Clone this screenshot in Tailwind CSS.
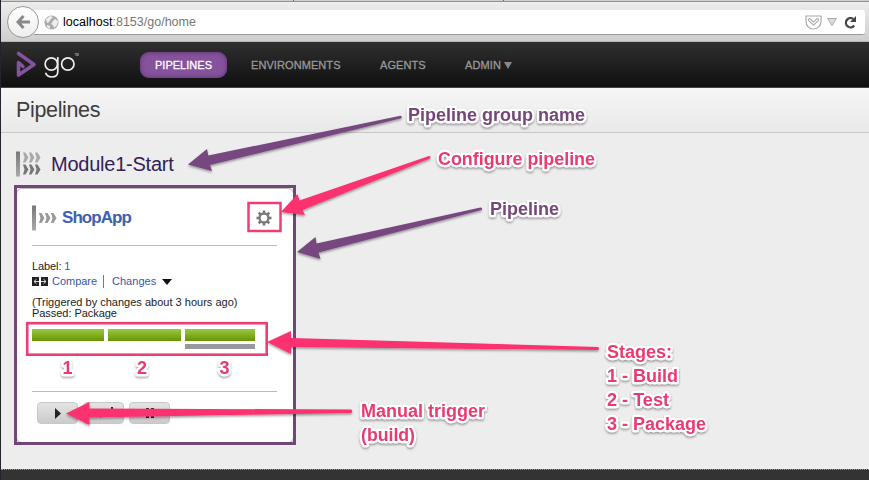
<!DOCTYPE html>
<html lang="en">
<head>
<meta charset="utf-8">
<title>Pipelines</title>
<script src="https://cdn.jsdelivr.net/npm/@tailwindcss/browser@4"></script>
</head>
<body class="relative h-[480px] w-[869px] overflow-hidden bg-[#ededed] font-['Liberation_Sans',sans-serif] text-[#222]">
<div class="flex h-[480px] flex-col border-l border-[#24242c]">
  <!-- Browser toolbar -->
  <div class="flex h-[2px] shrink-0 border-b border-[#939393] bg-[#cfcfcf]">
    <div class="w-[293px] border-r border-[#666]"></div><div class="w-[210px] border-r border-[#666]"></div>
  </div>
  <div class="flex h-10 shrink-0 items-center border-b border-[#b5b5b5] bg-linear-to-b from-[#ededed] to-[#cecece] pl-[6px] pr-[4px]">
    <div class="z-10 flex size-[32px] shrink-0 items-center justify-center rounded-full border border-[#999] bg-linear-to-b from-white to-[#eee]">
      <svg width="14" height="14" viewBox="0 0 14 14" fill="none" stroke="#888" stroke-width="3"><path d="M7.5 1 2 7l5.500 6M2 7h12"/></svg>
    </div>
    <div class="-ml-[5px] mt-[2px] flex h-[25px] grow items-center rounded-r-[3px] border-b border-[#999] bg-white pl-[10px] pr-[8px]">
      <svg width="15" height="15" viewBox="0 0 15 15"><circle cx="7.500" cy="7.500" r="7" fill="#aaa"/><path d="M2 4 6 1l3 1-2 2-2 3-2 1zM9 6l2-2 3 2-1 4-3 3-1-3-2-1zM3 10l3 1v3l-3-2z" fill="#eee"/></svg>
      <span class="ml-[4px] text-[12.5px] tracking-[0.01px] text-[#777] whitespace-nowrap"><span class="text-black">localhost</span>:8153/go/home</span>
      <svg class="ml-auto" width="17" height="15" viewBox="0 0 17 15" fill="none" stroke="#aaa" stroke-width="1.200"><path d="M1 1h15v5.500a7.500 7.500 0 0 1-15 0z"/><path d="M4.500 4.800 8.500 8.700l4-3.900" stroke-width="3.400" stroke-linecap="round"/><path d="M4.500 4.800 8.500 8.700l4-3.900" stroke="#f5f5f5" stroke-width="1.300" stroke-linecap="round"/></svg>
      <svg class="ml-[5px]" width="10" height="8" viewBox="0 0 10 8"><path d="M.5.500h9L5 7.500z" fill="#ddd" stroke="#aaa"/></svg>
      <svg class="ml-[7px]" width="13" height="13" viewBox="0 0 13 13"><path d="M10.200 9.500A4.600 4.600 0 1 1 9.200 3" fill="none" stroke="#444" stroke-width="2.300"/><path d="M12 0v6H6z" fill="#444"/></svg>
    </div>
  </div>

  <!-- Site navigation -->
  <nav class="flex h-[46px] shrink-0 items-center border-b border-[#444] bg-linear-to-b from-[#303030] to-[#101010] pl-[14px] text-[11px] text-[#999]">
    <svg class="shrink-0" width="64" height="32" viewBox="0 0 64 32">
      <path d="M3.500 4.500 19 15.500 3.500 26V13.500l4.500 4" fill="none" stroke="#85529f" stroke-width="3.600" stroke-linecap="round" stroke-linejoin="round"/>
      <g fill="none" stroke="#eee" stroke-width="1.700"><circle cx="36.300" cy="15" r="6.200"/><path d="M42.800 8v14.500c0 3.500-2.500 5.500-6 5.500-3.300 0-5.500-1.700-6.200-4.200"/><circle cx="52.800" cy="15" r="6.200"/></g>
      <text x="59.500" y="7" font-size="3" fill="#ddd">TM</text>
    </svg>
    <div class="ml-[61px] flex h-[26px] w-[87px] shrink-0 items-center justify-center rounded-[9px] bg-[#85529c] pt-px text-white shadow-[inset_0_0_4px_#55306b] [-webkit-text-stroke:0.3px_white]"><span class="tracking-[0.02px]">PIPELINES</span></div>
    <span class="ml-[24px] w-[90px] pt-[2px] tracking-[0.08px] [-webkit-text-stroke:0.3px_#999]">ENVIRONMENTS</span>
    <span class="ml-[39px] w-[46px] pt-[2px] tracking-[0.08px] [-webkit-text-stroke:0.3px_#999]">AGENTS</span>
    <span class="ml-[39px] w-[36px] pt-[2px] tracking-[0.1px] [-webkit-text-stroke:0.3px_#999]">ADMIN</span>
    <svg class="ml-[3px] mt-px" width="8" height="7" viewBox="0 0 8 7"><path d="M0 0h8L4 7z" fill="#888"/></svg>
  </nav>

  <header class="flex h-[45px] shrink-0 items-center border-b border-[#c8c8c8] bg-linear-to-b from-[#f6f6f6] to-[#e9e9e9] pl-[15px]">
    <h1 class="text-[21.5px] tracking-[-0.35px] text-[#3d3d3d]">Pipelines</h1>
  </header>

  <main class="flex h-[336px] shrink-0 flex-col pl-[15px] pt-[17px]">
    <div class="flex h-[28px] items-center">
      <svg width="26" height="26" viewBox="0 0 26 26">
        <defs>
          <linearGradient id="bar" x2="0" y2="1"><stop stop-color="#777"/><stop offset="1" stop-color="#aaa"/></linearGradient>
          <path id="chev" d="M0 0h2.500l3 5-3 5H0l1.500-5z"/>
        </defs>
        <rect width="4" height="25" y=".5" fill="url(#bar)"/>
        <g fill="#aaa"><use href="#chev" x="7" y="1.500"/><use href="#chev" x="13" y="1.500"/><use href="#chev" x="19" y="1.500"/></g>
        <g fill="#777"><use href="#chev" x="7" y="13.500"/><use href="#chev" x="13" y="13.500"/><use href="#chev" x="19" y="13.500"/></g>
      </svg>
      <h2 class="ml-[9px] text-[20px] tracking-[-0.24px] text-[#33205a]">Module1-Start</h2>
    </div>

    <section class="mt-[10px] flex h-[255px] w-[278px] flex-col rounded-[6px] border border-[#bbb] bg-white pl-[15px] pr-[16px] text-[11px]">
      <div class="mt-[16px] flex h-[26px] items-center">
        <svg width="25" height="26" viewBox="0 0 25 26"><rect width="4" height="25" y=".5" fill="url(#bar)"/><g fill="#999"><use href="#chev" x="7" y="8"/><use href="#chev" x="13" y="8"/><use href="#chev" x="19" y="8"/></g></svg>
        <h3 class="ml-[5px] text-[17px] font-bold tracking-[-0.95px] text-[#3b62b0]">ShopApp</h3>
        <svg class="ml-auto mr-[5px]" width="16" height="16" viewBox="-8 -8 16 16"><g fill="none" stroke="#777"><circle r="4.500" stroke-width="2.300"/><path stroke-width="2.600" d="M0-5v-2.500M0 5v2.500M5 0h2.500M-5 0h-2.500M3.600-3.600l1.700-1.700M-3.600 3.600l-1.700 1.700M3.600 3.600l1.700 1.700M-3.600-3.600l-1.700-1.700"/></g></svg>
      </div>
      <div class="mt-[14px] border-t border-[#bbb]"></div>
      <p class="mt-[13px] h-[15px] leading-[15px] tracking-[-0.1px]">Label: <span class="text-[#3659a8]">1</span></p>
      <div class="flex h-[15px] items-center text-[#3659a8]">
        <svg width="16" height="9" viewBox="0 0 16 9"><path d="M0 0h7v9H0zM9 0h7v9H9z" fill="#222"/><path d="M7 4.500H2m2.500-2.300L2 4.500l2.500 2.300M9 4.500h5m-2.500-2.300L14 4.500l-2.500 2.300" stroke="#ddd" stroke-width="1" fill="none"/></svg>
        <span class="ml-[4px] w-[45px] tracking-[-0.03px]">Compare</span>
        <span class="ml-[6px] h-[13px] border-l border-[#777]"></span>
        <span class="ml-[8px] w-[44px] tracking-[0.03px]">Changes</span>
        <svg class="ml-[6px]" width="10" height="6" viewBox="0 0 10 6"><path d="M0 0h10L5 6z" fill="#111"/></svg>
      </div>
      <p class="mt-[8px] leading-[11px] tracking-[0.01px] whitespace-nowrap">(Triggered by changes about 3 hours ago)<br><span class="tracking-[-0.05px]">Passed: Package</span></p>
      <div class="mt-[10px] flex h-[20px] items-start gap-[4px]">
        <div class="h-[12px] w-[72px] bg-linear-to-b from-[#9cc83a] to-[#679500]"></div>
        <div class="h-[12px] w-[73px] bg-linear-to-b from-[#9cc83a] to-[#679500]"></div>
        <div class="w-[70px]"><div class="h-[12px] bg-linear-to-b from-[#9cc83a] to-[#679500]"></div><div class="mt-[3px] h-[5px] bg-[#999]"></div></div>
      </div>
      <div class="mt-[42px] border-t border-[#bbb]"></div>
      <div class="ml-[5px] mt-[10px] flex gap-[5px]">
        <button class="flex h-[22px] w-[41px] items-center justify-center rounded-[4px] border border-[#c8c8c8] bg-linear-to-b from-[#e4e4e4] to-[#cbcbcb]"><svg width="6" height="11" viewBox="0 0 6 11"><path d="M0 0 6 5.500 0 11z" fill="#222"/></svg></button>
        <button class="flex h-[22px] w-[41px] items-center justify-center rounded-[4px] border border-[#c8c8c8] bg-linear-to-b from-[#e4e4e4] to-[#cbcbcb]"><svg class="ml-[6px]" width="13" height="12" viewBox="0 0 13 12"><path d="M0 2 5 6 0 11zM11 0h2v10h-2z" fill="#222"/></svg></button>
        <button class="flex h-[22px] w-[41px] items-center justify-center rounded-[4px] border border-[#c8c8c8] bg-linear-to-b from-[#e4e4e4] to-[#cbcbcb]"><svg width="8" height="10" viewBox="0 0 8 10"><path d="M0 0h3v10H0zM5 0h3v10H5z" fill="#222"/></svg></button>
      </div>
    </section>
  </main>
  <footer class="grow border-t border-dotted border-[#999] bg-[#333]"></footer>
</div>

<!-- Callouts drawn over the page -->
<svg class="pointer-events-none absolute left-0 top-0" width="869" height="480" viewBox="0 0 869 480">
  <defs>
    <filter id="sh" x="-10%" y="-20%" width="120%" height="150%"><feDropShadow dx="0" dy="1.500" stdDeviation="1" flood-opacity=".4"/></filter>
  </defs>
  <g fill="none" stroke-width="3">
    <rect x="15.500" y="186.500" width="279" height="257" stroke="#724679"/>
    <g stroke="#ee3f73"><rect x="248.500" y="203" width="32" height="28" stroke-width="2.500"/><rect x="27.200" y="323.200" width="239.500" height="31.500" stroke-width="2.600"/></g>
  </g>
  <g fill="#774680" filter="url(#sh)">
    <path d="M188 164.500 207 149l1.300 6.500L400.500 115.800q2 .7.700 2.500L210 165l2 6z"/>
    <path d="M297 252 315.500 237l1 6.500L480.500 207.500q2.500.5 1 2.500L318.500 252.500l2 6.500z"/>
  </g>
  <g fill="#fc306f" filter="url(#sh)">
    <path d="M281 212 297.500 194l2 6.500L429 156q2.500.5 1 2.500L302.500 210l2.500 5z"/>
    <path d="M267 342 291 331v7L598 347q2 1.500 0 3L291 347v7z"/>
    <path d="M66 413.500 89.500 402v6.500L351 409.500q2.500 1.500 0 3.500L89.500 417.500v7.500z"/>
  </g>
  <g class="font-bold" font-size="18" stroke="#fff" stroke-width="4.500" stroke-linejoin="round" paint-order="stroke" filter="url(#sh)">
    <g fill="#754779">
      <text x="408" y="121" textLength="177" lengthAdjust="spacingAndGlyphs">Pipeline group name</text>
      <text x="490" y="215" textLength="69" lengthAdjust="spacingAndGlyphs">Pipeline</text>
    </g>
    <g fill="#e93b70">
      <text x="438" y="165" textLength="157" lengthAdjust="spacingAndGlyphs">Configure pipeline</text>
      <text x="361" y="417" textLength="124" lengthAdjust="spacingAndGlyphs">Manual trigger</text>
      <text x="361" y="441" textLength="54" lengthAdjust="spacingAndGlyphs">(build)</text>
      <text x="607" y="358" textLength="65" lengthAdjust="spacingAndGlyphs">Stages:</text>
      <text x="607" y="382" textLength="71" lengthAdjust="spacingAndGlyphs">1 - Build</text>
      <text x="607" y="406" textLength="62" lengthAdjust="spacingAndGlyphs">2 - Test</text>
      <text x="607" y="430" textLength="99" lengthAdjust="spacingAndGlyphs">3 - Package</text>
      <text x="62.500" y="374">1</text><text x="137" y="374">2</text><text x="219.500" y="374">3</text>
    </g>
  </g>
</svg>
</body>
</html>
